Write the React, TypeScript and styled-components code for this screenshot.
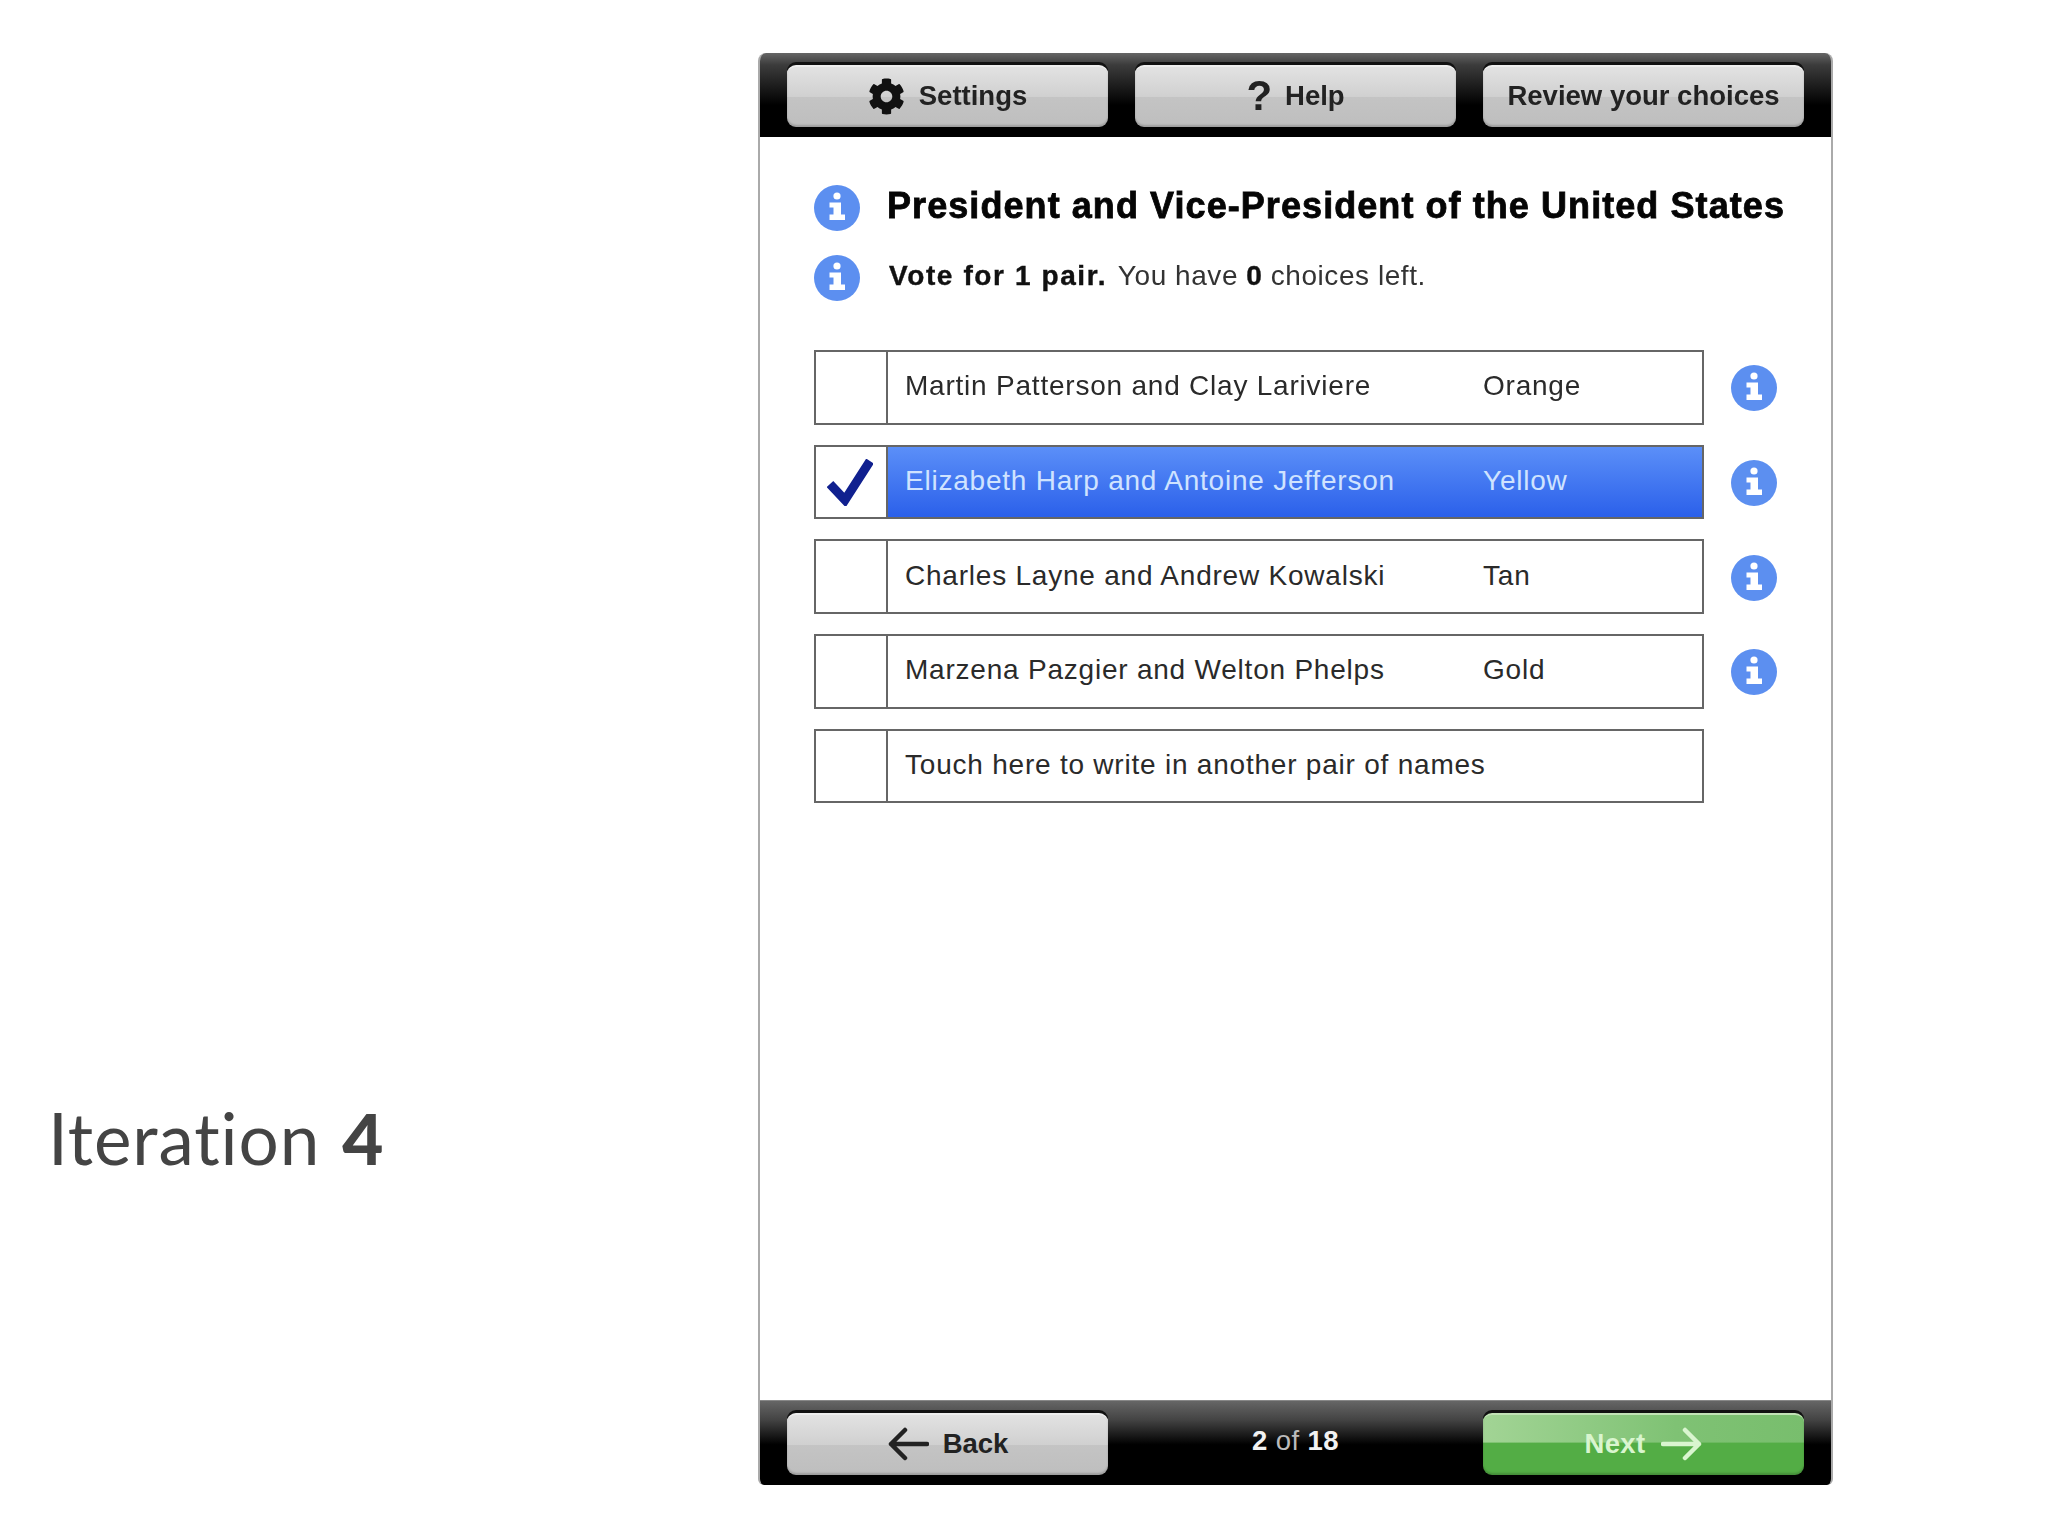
import * as React from "react";
import styled, { createGlobalStyle } from "styled-components";
import { FaCog } from "react-icons/fa";

const GlobalStyle = createGlobalStyle`
  html, body {
    margin: 0;
    padding: 0;
    background: #fff;
  }
  body {
    font-family: "Liberation Sans", Arial, sans-serif;
  }
`;

const choices = [
  { name: "Martin Patterson and Clay Lariviere", party: "Orange", info: true },
  { name: "Elizabeth Harp and Antoine Jefferson", party: "Yellow", info: true, selected: true },
  { name: "Charles Layne and Andrew Kowalski", party: "Tan", info: true },
  { name: "Marzena Pazgier and Welton Phelps", party: "Gold", info: true },
  { name: "Touch here to write in another pair of names", party: "", info: false },
];

function InfoIcon() {
  return (
    <InfoSvg viewBox="0 0 46 46">
      <circle cx="23" cy="23" r="23" fill="#5c8ff0" />
      <circle cx="23" cy="11" r="3.6" fill="#fff" />
      <path d="M15.5 17.5H27V29.5H31V35H15.5V29.5H19.5V22.5H15.5z" fill="#fff" />
    </InfoSvg>
  );
}

function ArrowLeft() {
  return (
    <ArrowSvg viewBox="0 0 42 34">
      <path d="M40 17H4M18 3 4 17l14 14" />
    </ArrowSvg>
  );
}

function ArrowRight() {
  return (
    <ArrowSvg viewBox="0 0 42 34">
      <path d="M2 17h36M24 3l14 14-14 14" />
    </ArrowSvg>
  );
}

export default function App() {
  return (
    <Page>
      <GlobalStyle />
      <Caption>
        Iteration <strong>4</strong>
      </Caption>
      <Panel>
        <TopBar>
          <BarButton>
            <GearIcon />
            Settings
          </BarButton>
          <BarButton>
            <QuestionMark>?</QuestionMark>
            Help
          </BarButton>
          <BarButton>Review your choices</BarButton>
        </TopBar>
        <Content>
          <HeadingRow>
            <InfoIcon />
            <Title>President and Vice-President of the United States</Title>
          </HeadingRow>
          <InstructionRow>
            <InfoIcon />
            <Instruction>
              <Rule>Vote for 1 pair.</Rule> You have <b>0</b> choices left.
            </Instruction>
          </InstructionRow>
          <ChoiceList>
            {choices.map((choice) => (
              <ChoiceRow key={choice.name}>
                <Choice>
                  <CheckCell>
                    {choice.selected && (
                      <CheckSvg viewBox="0 0 46 47">
                        <path d="M3 25 18 41 43 2" />
                      </CheckSvg>
                    )}
                  </CheckCell>
                  <ChoiceBody $selected={choice.selected}>
                    <ChoiceName>{choice.name}</ChoiceName>
                    <span>{choice.party}</span>
                  </ChoiceBody>
                </Choice>
                {choice.info && <InfoIcon />}
              </ChoiceRow>
            ))}
          </ChoiceList>
        </Content>
        <BottomBar>
          <BarButton>
            <ArrowLeft />
            Back
          </BarButton>
          <PageCount>
            <b>2</b> of <b>18</b>
          </PageCount>
          <BarButton $primary>
            Next
            <ArrowRight />
          </BarButton>
        </BottomBar>
      </Panel>
    </Page>
  );
}

const Page = styled.div`
  display: flex;
  align-items: flex-start;
  width: 2048px;
  height: 1536px;
  padding-top: 53px;
  box-sizing: border-box;
  background: #fff;
  overflow: hidden;
`;

const Caption = styled.div`
  width: 758px;
  flex: none;
  box-sizing: border-box;
  padding: 1043px 0 0 48px;
  font-family: Lato, sans-serif;
  font-size: 71px;
  line-height: 84px;
  font-weight: 400;
  color: #444;
  letter-spacing: 0.9px;
  word-spacing: 3px;
  filter: blur(0.4px);

  strong {
    font-weight: 900;
  }
`;

const Panel = styled.div`
  display: flex;
  flex-direction: column;
  width: 1075px;
  height: 1432px;
  box-sizing: border-box;
  border-left: 2px solid #aaa;
  border-right: 2px solid #aaa;
  border-radius: 8px 8px 6px 6px;
  overflow: hidden;
  filter: blur(0.5px);
`;

const TopBar = styled.div`
  display: grid;
  grid-template-columns: repeat(3, 321px);
  gap: 27px;
  height: 84px;
  box-sizing: border-box;
  padding: 12px 29px 10px;
  margin: 0 -2px;
  background: linear-gradient(#666 0, #3c3c3c 14%, #000 62%, #000 100%);
`;

const BottomBar = styled(TopBar)`
  align-items: start;
  height: 85px;
  padding-top: 12px;
  border-top: 1px solid #888;
  background: linear-gradient(#666 0, #444 22%, #000 52%, #000 100%);
`;

const BarButton = styled.div<{ $primary?: boolean }>`
  display: flex;
  align-items: center;
  justify-content: center;
  height: 62px;
  padding-bottom: 2px;
  gap: ${(p) => (p.$primary ? "15px" : "14px")};
  border-radius: 9px;
  font-size: 27.5px;
  font-weight: 700;
  letter-spacing: ${(p) => (p.$primary ? "0.4px" : "0")};
  color: ${(p) => (p.$primary ? "#d9f5cf" : "#222")};
  border-top: 2px solid ${(p) => (p.$primary ? "#c2e3b6" : "#eee")};
  box-sizing: border-box;
  background: ${(p) =>
    p.$primary
      ? "linear-gradient(90deg, #a2d495, #7fc274 60%, #78be6d) top / 100% 46% no-repeat, #53ad45"
      : "linear-gradient(#e2e2e2, #d0d0d0) top / 100% 50% no-repeat, linear-gradient(#cacaca, #bebebe)"};
  box-shadow: 0 -3px 0 #111, inset 0 -2px 2px rgba(0, 0, 0, 0.18);
`;

const GearIcon = styled(FaCog)`
  width: 37px;
  height: 37px;
  color: #111;
`;

const QuestionMark = styled.span`
  font-size: 42px;
  line-height: 1;
  margin-right: -1px;
`;

const ArrowSvg = styled.svg`
  width: 42px;
  height: 34px;
  fill: none;
  stroke: currentColor;
  stroke-width: 4.5;
  stroke-linecap: round;
  stroke-linejoin: round;
`;

const PageCount = styled.div`
  height: 62px;
  line-height: 56px;
  text-align: center;
  font-size: 27.5px;
  letter-spacing: 0.4px;
  color: #bbb;

  b {
    color: #f2f2f2;
  }
`;

const Content = styled.div`
  flex: 1;
  display: flex;
  flex-direction: column;
  padding: 47px 0 0 54px;
  background: #fff;
`;

const HeadingRow = styled.div`
  display: flex;
  align-items: center;
  gap: 27px;
  height: 47px;
`;

const InstructionRow = styled(HeadingRow)`
  margin-top: 23px;
  gap: 29px;
`;

const InfoSvg = styled.svg`
  flex: none;
  width: 46px;
  height: 46px;
`;

const Title = styled.h1`
  margin: -4px 0 0;
  font-size: 36px;
  font-weight: 700;
  color: #050505;
  letter-spacing: 1.07px;
  -webkit-text-stroke: 0.8px #050505;
  white-space: nowrap;
`;

const Instruction = styled.div`
  margin-top: -3px;
  font-size: 28px;
  color: #333;
  letter-spacing: 0.55px;

  b {
    color: #111;
    -webkit-text-stroke: 0.4px #111;
  }
`;

const Rule = styled.b`
  letter-spacing: 1.6px;
  margin-right: 3px;
`;

const ChoiceList = styled.div`
  display: flex;
  flex-direction: column;
  gap: 20px;
  margin-top: 49px;
`;

const ChoiceRow = styled.div`
  display: flex;
  align-items: center;
  gap: 27px;

  ${InfoSvg} {
    margin-top: 2px;
  }
`;

const Choice = styled.div`
  display: flex;
  width: 890px;
  height: 74.7px;
  box-sizing: border-box;
  border: 2.5px solid #666;
`;

const CheckCell = styled.div`
  display: flex;
  align-items: center;
  justify-content: center;
  width: 72px;
  flex: none;
  padding-right: 3px;
  box-sizing: border-box;
  border-right: 2.5px solid #666;
`;

const CheckSvg = styled.svg`
  width: 46px;
  height: 47px;
  fill: none;
  stroke: #10208f;
  stroke-width: 9;
`;

const ChoiceBody = styled.div<{ $selected?: boolean }>`
  display: flex;
  align-items: center;
  flex: 1;
  padding: 0 0 2px 17px;
  font-size: 28px;
  letter-spacing: 0.78px;
  color: ${(p) => (p.$selected ? "#cfe3ff" : "#2a2a2a")};
  background: ${(p) => (p.$selected ? "linear-gradient(#5b8ff8, #2b60ea)" : "#fff")};
`;

const ChoiceName = styled.span`
  width: 578px;
  flex: none;
  white-space: nowrap;
`;
